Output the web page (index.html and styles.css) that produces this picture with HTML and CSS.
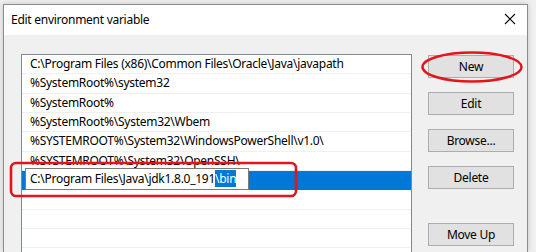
FILE: index.html
```html
<!DOCTYPE html>
<html>
<head>
<meta charset="utf-8">
<link rel="stylesheet" href="styles.css">
</head>
<body>
<div class="dialog">
  <div class="titlebar">
    <span class="title">Edit environment variable</span>
    <svg class="close" width="12" height="12" viewBox="0 0 12 12"><path d="M1 1L11 11M11 1L1 11" stroke="#000" stroke-width="1.1" fill="none"/></svg>
  </div>
  <div class="content">
    <div class="list">
      <div class="row">C:\Program Files (x86)\Common Files\Oracle\Java\javapath</div>
      <div class="row">%SystemRoot%\system32</div>
      <div class="row">%SystemRoot%</div>
      <div class="row">%SystemRoot%\System32\Wbem</div>
      <div class="row">%SYSTEMROOT%\System32\WindowsPowerShell\v1.0\</div>
      <div class="row">%SYSTEMROOT%\System32\OpenSSH\</div>
      <div class="row selected">
        <div class="editbox">C:\Program Files\Java\jdk1.8.0_191<span class="sel">\bin</span></div>
      </div>
      <div class="row"></div>
      <div class="row"></div>
      <div class="row"></div>
    </div>
    <div class="buttons">
      <div class="btn">New</div>
      <div class="btn">Edit</div>
      <div class="btn">Browse...</div>
      <div class="btn">Delete</div>
      <div class="btn moveup">Move Up</div>
    </div>
  </div>
</div>
<svg class="annot" width="536" height="252" viewBox="0 0 536 252">
  <ellipse cx="472" cy="67" rx="49.5" ry="14.5" fill="none" stroke="#e3141c" stroke-width="2.5"/>
  <rect x="11" y="163" width="285" height="33" rx="5" ry="5" fill="none" stroke="#e3141c" stroke-width="2.6"/>
</svg>
</body>
</html>
```
FILE: styles.css
```css
html, body {
  margin: 0;
  padding: 0;
}
body {
  width: 536px;
  height: 252px;
  overflow: hidden;
  background: #f0f0f0;
  font-family: "Noto Sans", "Open Sans", sans-serif;
  font-size: 12px;
  letter-spacing: -0.27px;
  color: #000;
  position: relative;
}
.dialog {
  margin: 4px 0 0 3px;
  width: 525px;
  height: 248px;
  overflow: hidden;
  box-sizing: border-box;
  border: 1px solid #8c8c8c;
  border-bottom: none;
  background: #f0f0f0;
  box-shadow: 0 0 6px rgba(0,0,0,0.18);
}
.titlebar {
  height: 30px;
  background: #fff;
  display: flex;
  align-items: center;
  justify-content: space-between;
  padding: 0 11px 0 7px;
}
.title {
  font-size: 12px;
  margin-top: -1px;
}
.close {
  margin-top: -2px;
}
.content {
  display: flex;
  padding: 19px 0 0 17px;
}
.list {
  width: 391px;
  height: 200px;
  overflow: hidden;
  box-sizing: border-box;
  border: 1px solid #828790;
  border-bottom: none;
  background: #fff;
}
.row {
  height: 19.35px;
  box-sizing: border-box;
  border-bottom: 1px solid #f0f0f0;
  padding-left: 8px;
  line-height: 17px;
  white-space: nowrap;
}
.row.selected {
  background: #0078d7;
  border-bottom-color: #0078d7;
  padding-left: 3px;
  display: flex;
  align-items: flex-start;
  overflow: visible;
}
.editbox {
  margin-top: -3px;
  width: 224px;
  height: 22px;
  box-sizing: border-box;
  border: 1px solid #7a7a7a;
  background: #fff;
  padding-left: 4px;
  line-height: 19px;
  color: #000;
}
.sel {
  background: #0078d7;
  color: #fff;
}
.buttons {
  margin-left: 16px;
  margin-top: 1px;
  display: flex;
  flex-direction: column;
  gap: 14px;
}
.btn {
  width: 86px;
  height: 23px;
  box-sizing: border-box;
  border: 1px solid #adadad;
  background: #e1e1e1;
  display: flex;
  align-items: center;
  justify-content: center;
}
.btn.moveup {
  margin-top: 20px;
}
.annot {
  position: absolute;
  left: 0;
  top: 0;
}
```
